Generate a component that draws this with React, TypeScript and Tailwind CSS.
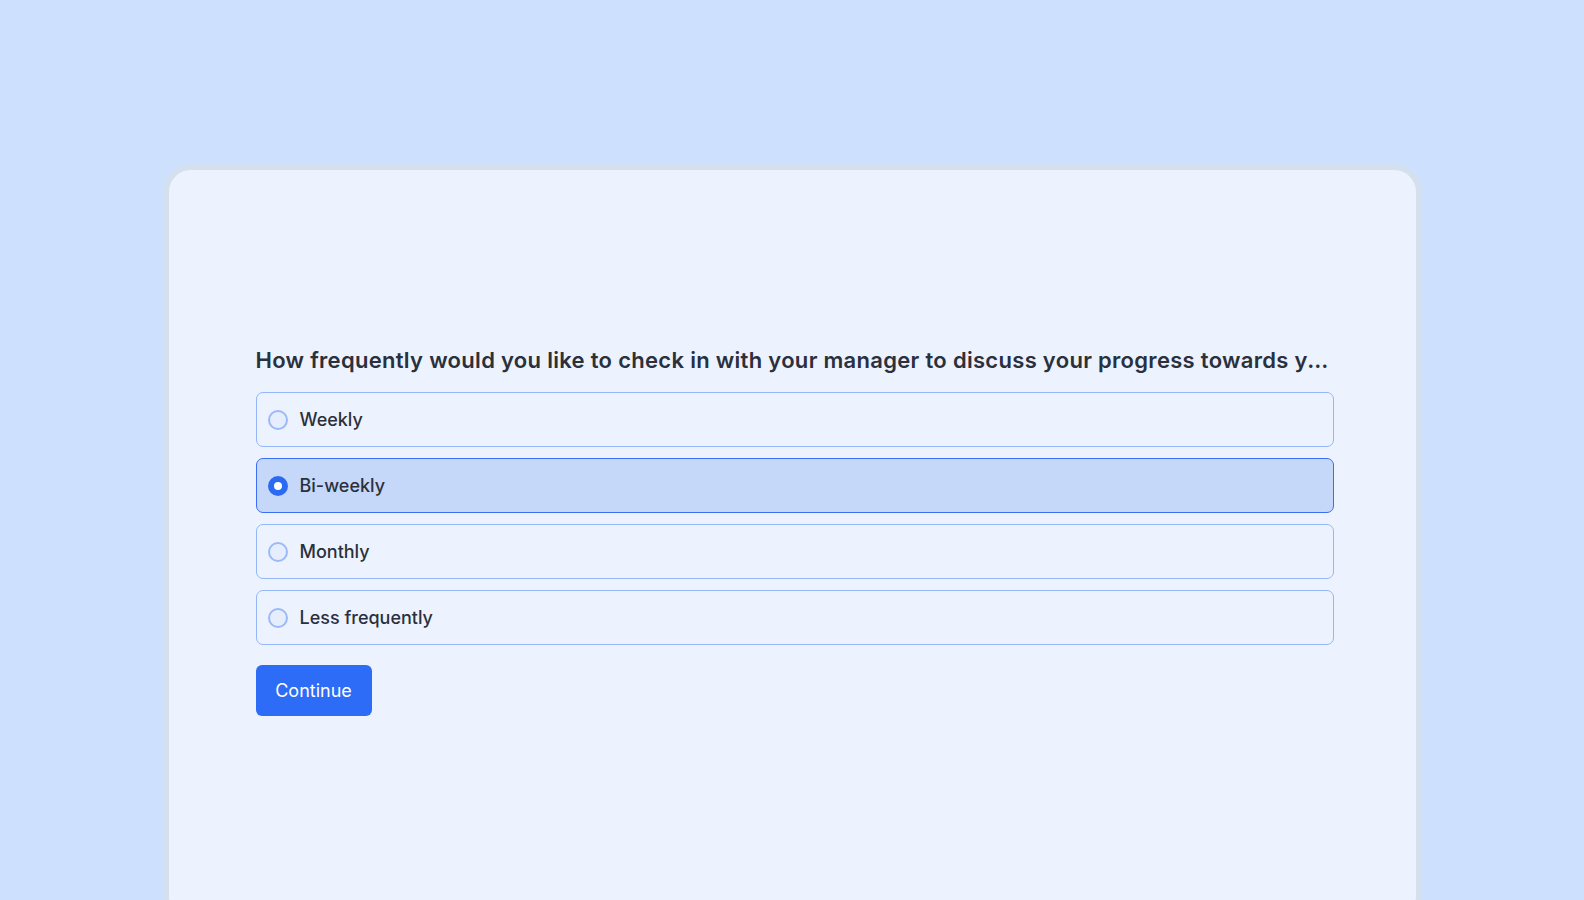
import { useState } from 'react';

const options = ['Weekly', 'Bi-weekly', 'Monthly', 'Less frequently'];

export default function App() {
  const [picked, setPicked] = useState('Bi-weekly');

  return (
    <div className="h-[900px] overflow-hidden bg-[#cde0fe] font-['Inter',sans-serif] text-[#2a303c]">
      <div className="mx-auto mt-[164px] h-[760px] w-[1259px] rounded-[28px] border-[6px] border-[#d5e0ef] bg-[#ecf2fe]">
        <div className="ml-[87px] w-[1078px] pt-[174px]">
          <h1 className="truncate text-[22px] font-semibold leading-[32px] tracking-[0.3px] text-[#2a303c]">
            How frequently would you like to check in with your manager to discuss your progress towards your goals and development?
          </h1>
          <div className="mt-[16px] flex flex-col gap-[11px]">
            {options.map((o) => {
              const on = o === picked;
              return (
                <button
                  key={o}
                  onClick={() => setPicked(o)}
                  className={
                    on
                      ? 'flex h-[55px] items-center gap-[12px] rounded-[7px] border border-[#3a6ef4] bg-[#c5d8fa] px-[11px] text-left'
                      : 'flex h-[55px] items-center gap-[12px] rounded-[7px] border border-[#95b6f8] bg-[#edf3fe] px-[11px] text-left'
                  }
                >
                  {on ? (
                    <span className="flex h-[20px] w-[20px] items-center justify-center rounded-full bg-[#2c69f3]">
                      <span className="h-[8px] w-[8px] rounded-full bg-white" />
                    </span>
                  ) : (
                    <span className="h-[20px] w-[20px] rounded-full border-[2.5px] border-[#9bb9f8] bg-[#e6eefd]" />
                  )}
                  <span className="text-[18px] font-medium text-[#2a303c]">{o}</span>
                </button>
              );
            })}
          </div>
          <button className="mt-[20px] h-[51px] w-[116px] rounded-[6px] bg-[#2c6cf6] text-[18px] text-white">
            Continue
          </button>
        </div>
      </div>
    </div>
  );
}
